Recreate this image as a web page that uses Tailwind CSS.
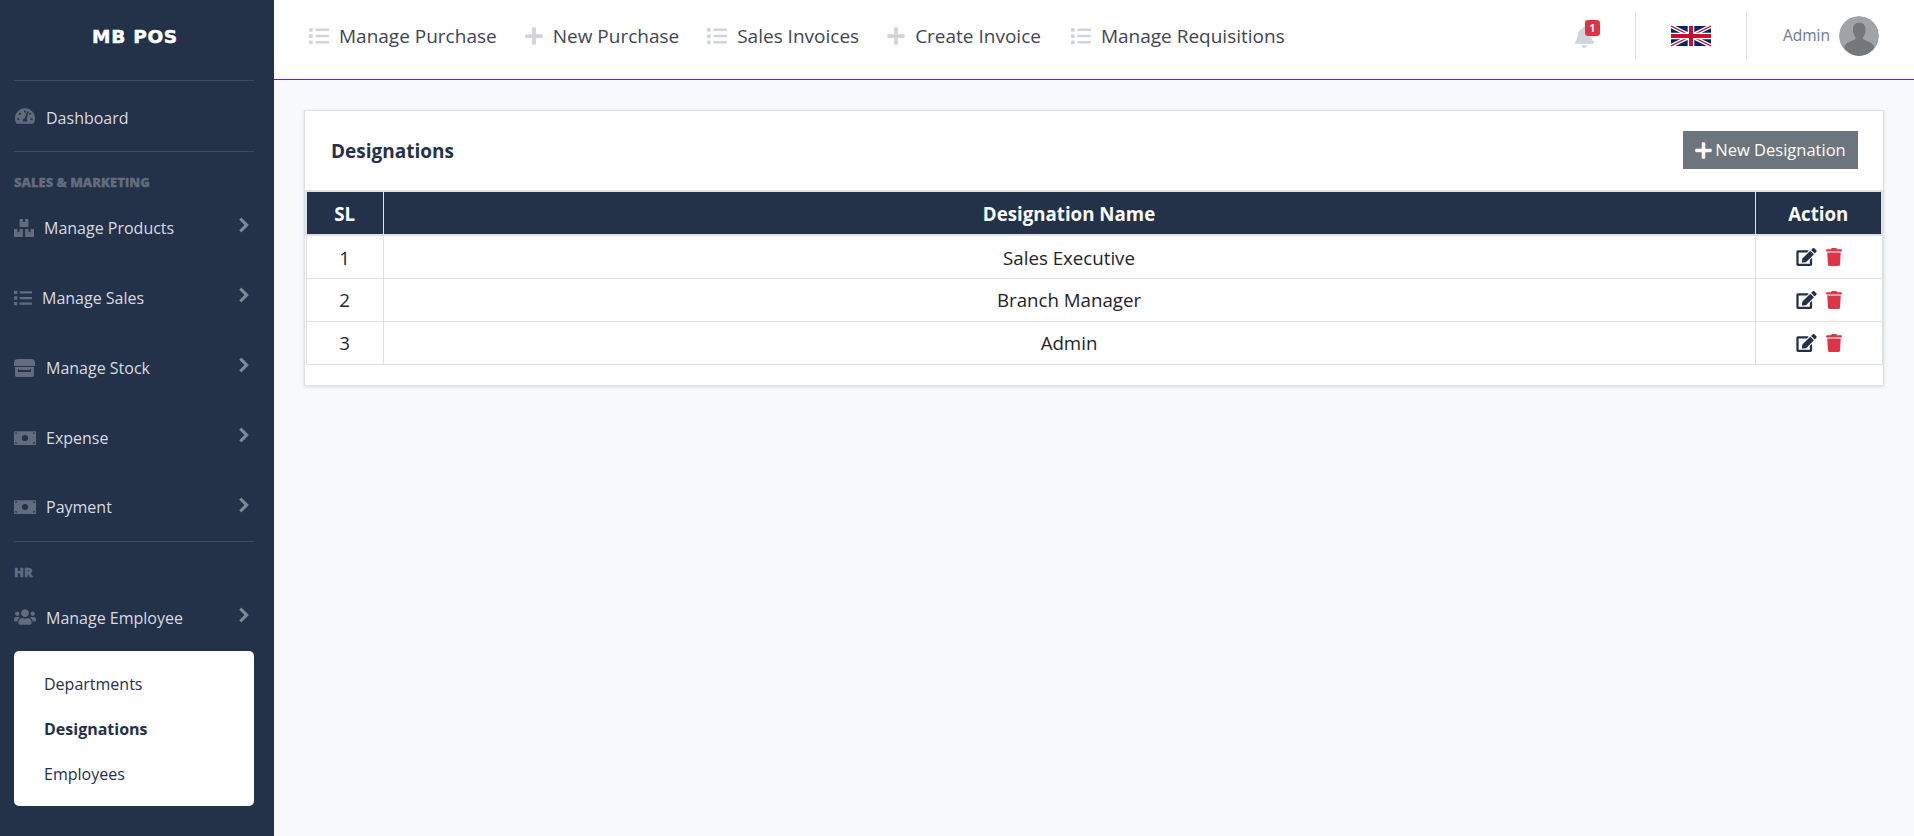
<!DOCTYPE html><html lang="en">
  <head>
    <meta charset="UTF-8" />
    <meta name="viewport" content="width=device-width, initial-scale=1.0" />
    <title>Designations</title>
    <script src="https://cdn.jsdelivr.net/npm/@tailwindcss/browser@4"></script>
  </head>
  <body class="bg-[#f8f9fa] h-[836px] overflow-hidden font-['Open_Sans',sans-serif] text-[#212529]">
    <svg class="hidden">
      <symbol id="i-list" viewBox="0 0 512 512"><path fill="currentColor" d="M80 368H16a16 16 0 0 0-16 16v64a16 16 0 0 0 16 16h64a16 16 0 0 0 16-16v-64a16 16 0 0 0-16-16zm0-320H16A16 16 0 0 0 0 64v64a16 16 0 0 0 16 16h64a16 16 0 0 0 16-16V64a16 16 0 0 0-16-16zm0 160H16a16 16 0 0 0-16 16v64a16 16 0 0 0 16 16h64a16 16 0 0 0 16-16v-64a16 16 0 0 0-16-16zm416 176H176a16 16 0 0 0-16 16v32a16 16 0 0 0 16 16h320a16 16 0 0 0 16-16v-32a16 16 0 0 0-16-16zm0-320H176a16 16 0 0 0-16 16v32a16 16 0 0 0 16 16h320a16 16 0 0 0 16-16V80a16 16 0 0 0-16-16zm0 160H176a16 16 0 0 0-16 16v32a16 16 0 0 0 16 16h320a16 16 0 0 0 16-16v-32a16 16 0 0 0-16-16z"/></symbol>
      <symbol id="i-plus" viewBox="0 0 448 512"><path fill="currentColor" d="M416 208H272V64c0-17.67-14.33-32-32-32h-32c-17.67 0-32 14.33-32 32v144H32c-17.67 0-32 14.33-32 32v32c0 17.67 14.33 32 32 32h144v144c0 17.67 14.33 32 32 32h32c17.67 0 32-14.33 32-32V304h144c17.67 0 32-14.33 32-32v-32c0-17.67-14.33-32-32-32z"/></symbol>
      <symbol id="i-chevron" viewBox="0 0 320 512"><path fill="currentColor" stroke="currentColor" stroke-width="28" d="M285.476 272.971L91.132 467.314c-9.373 9.373-24.569 9.373-33.941 0l-22.667-22.667c-9.357-9.357-9.375-24.522-.04-33.901L188.505 256 34.484 101.255c-9.335-9.379-9.317-24.544.04-33.901l22.667-22.667c9.373-9.373 24.569-9.373 33.941 0L285.475 239.03c9.373 9.372 9.373 24.568.001 33.941z"/></symbol>
      <symbol id="i-money" viewBox="0 0 640 400"><path fill="currentColor" fill-rule="evenodd" d="M20 0h600a20 20 0 0 1 20 20v360a20 20 0 0 1-20 20H20a20 20 0 0 1-20-20V20A20 20 0 0 1 20 0zM320 110a90 90 0 1 0 0 180 90 90 0 0 0 0-180zM40 40v50a50 50 0 0 0 50-50zm510 0a50 50 0 0 0 50 50V40zM40 310v50h50a50 50 0 0 0-50-50zm560 0a50 50 0 0 0-50 50h50z"/></symbol>
      <symbol id="i-edit" viewBox="0 0 576 512"><path fill="currentColor" d="M402.6 83.2l90.2 90.2c3.8 3.8 3.8 10 0 13.8L274.4 405.6l-92.8 10.3c-12.4 1.4-22.9-9.1-21.5-21.5l10.3-92.8L388.8 83.2c3.8-3.8 10-3.8 13.8 0zm162-22.9l-48.8-48.8c-15.2-15.2-39.9-15.2-55.2 0l-35.4 35.4c-3.8 3.8-3.8 10 0 13.8l90.2 90.2c3.8 3.8 10 3.8 13.8 0l35.4-35.4c15.2-15.3 15.2-40 0-55.2zM384 346.2V448H64V128h229.8c3.2 0 6.2-1.3 8.5-3.5l40-40c7.6-7.6 2.2-20.5-8.5-20.5H48C21.5 64 0 85.5 0 112v352c0 26.5 21.5 48 48 48h352c26.5 0 48-21.5 48-48V306.2c0-10.7-12.9-16-20.5-8.5l-40 40c-2.2 2.3-3.5 5.3-3.5 8.5z"/></symbol>
      <symbol id="i-trash" viewBox="0 0 448 512"><path fill="currentColor" d="M432 32H312l-9.4-18.7A24 24 0 0 0 281.1 0H166.8a23.72 23.72 0 0 0-21.4 13.3L136 32H16A16 16 0 0 0 0 48v32a16 16 0 0 0 16 16h416a16 16 0 0 0 16-16V48a16 16 0 0 0-16-16zM53.2 467a48 48 0 0 0 47.9 45h245.8a48 48 0 0 0 47.9-45L416 128H32z"/></symbol>
    </svg>

    <div class="flex h-full">
      <!-- sidebar -->
      <aside class="w-[274px] shrink-0 bg-[#233149] text-[#d8dce2] text-[16px]">
        <div class="h-[80px] flex items-center justify-center pr-[4px] pb-[6px] text-white text-[18.5px] tracking-[0.7px] font-bold font-['DejaVu_Sans',sans-serif] [-webkit-text-stroke:0.5px_white]">MB POS</div>
        <div class="ml-[14px] mr-[20px] border-t border-[#3e4b61]"></div>
        <a class="h-[70px] flex items-center pl-[15px] pt-[3px]">
          <svg class="w-[20px] h-[18px] text-[#626c7e] mr-[11px] -mt-[3px]" viewBox="0 0 576 512"><path fill="currentColor" d="M288 32C128.94 32 0 160.94 0 320c0 52.8 14.25 102.26 39.06 144.8 5.61 9.62 16.3 15.2 27.44 15.2h443c11.14 0 21.83-5.58 27.44-15.2C561.75 422.26 576 372.8 576 320c0-159.06-128.94-288-288-288zm0 64c14.71 0 26.58 10.13 30.32 23.65-1.11 2.26-2.64 4.23-3.45 6.67l-9.22 27.67c-5.13 3.49-10.97 6.01-17.64 6.01-17.67 0-32-14.33-32-32S270.33 96 288 96zM96 384c-17.67 0-32-14.33-32-32s14.33-32 32-32 32 14.33 32 32-14.33 32-32 32zm48-160c-17.67 0-32-14.33-32-32s14.33-32 32-32 32 14.33 32 32-14.33 32-32 32zm246.77-72.41l-61.33 184C343.13 347.33 352 364.54 352 384c0 11.72-3.38 22.55-8.88 32H232.88c-5.5-9.45-8.88-20.28-8.88-32 0-33.94 26.5-61.43 59.9-63.59l61.34-184.01c4.17-12.56 17.73-19.45 30.36-15.17 12.57 4.19 19.35 17.79 15.17 30.36zm14.66 57.2l15.52-46.55c3.47-1.29 7.13-2.23 11.05-2.23 17.67 0 32 14.33 32 32s-14.33 32-32 32c-11.38-.01-20.89-6.28-26.57-15.22zM480 384c-17.67 0-32-14.33-32-32s14.33-32 32-32 32 14.33 32 32-14.33 32-32 32z"/></svg>
          <span>Dashboard</span>
        </a>
        <div class="ml-[14px] mr-[20px] border-t border-[#3e4b61]"></div>
        <div class="h-[41px] pt-[21px] pl-[14px] text-[13px] leading-[18px] font-extrabold text-[#626c7e] [-webkit-text-stroke:0.3px_#626c7e]">SALES &amp; MARKETING</div>

        <a class="h-[70px] flex items-center pl-[14px] pr-[24px]">
          <svg class="w-[20px] h-[18px] text-[#626c7e] mr-[10px]" viewBox="0 0 576 512"><path fill="currentColor" d="M560 288h-80v96l-32-21.3-32 21.3v-96h-80c-8.8 0-16 7.2-16 16v192c0 8.8 7.2 16 16 16h224c8.8 0 16-7.2 16-16V304c0-8.8-7.2-16-16-16zm-384-64h224c8.8 0 16-7.2 16-16V16c0-8.8-7.2-16-16-16h-80v96l-32-21.3L256 96V0h-80c-8.8 0-16 7.2-16 16v192c0 8.8 7.2 16 16 16zm64 64h-80v96l-32-21.3L96 384v-96H16c-8.8 0-16 7.2-16 16v192c0 8.8 7.2 16 16 16h224c8.8 0 16-7.2 16-16V304c0-8.8-7.2-16-16-16z"/></svg>
          <span class="flex-1 -mt-[1px]">Manage Products</span>
          <svg class="w-[12px] h-[16px] text-[#7f8a9b] -mt-[6px]"><use href="#i-chevron"/></svg>
        </a>
        <a class="h-[70px] flex items-center pl-[14px] pr-[24px]">
          <svg class="w-[18px] h-[18px] text-[#626c7e] mr-[10px]"><use href="#i-list"/></svg>
          <span class="flex-1 -mt-[1px]">Manage Sales</span>
          <svg class="w-[12px] h-[16px] text-[#7f8a9b] -mt-[6px]"><use href="#i-chevron"/></svg>
        </a>
        <a class="h-[70px] flex items-center pl-[14px] pr-[24px]">
          <svg class="w-[21px] h-[18px] text-[#626c7e] mr-[11px]" viewBox="0 0 21 18"><path fill="currentColor" fill-rule="evenodd" d="M4 0h13a4 4 0 0 1 4 4v3H0V4a4 4 0 0 1 4-4zM1 8h19v8a2 2 0 0 1-2 2H3a2 2 0 0 1-2-2zm3 2v3h13v-3h-1v1H5v-1z"/></svg>
          <span class="flex-1 -mt-[1px]">Manage Stock</span>
          <svg class="w-[12px] h-[16px] text-[#7f8a9b] -mt-[6px]"><use href="#i-chevron"/></svg>
        </a>
        <a class="h-[70px] flex items-center pl-[14px] pr-[24px]">
          <svg class="w-[22px] h-[14px] text-[#626c7e] mr-[10px]"><use href="#i-money"/></svg>
          <span class="flex-1 -mt-[1px]">Expense</span>
          <svg class="w-[12px] h-[16px] text-[#7f8a9b] -mt-[6px]"><use href="#i-chevron"/></svg>
        </a>
        <a class="h-[68px] flex items-center pl-[14px] pr-[24px]">
          <svg class="w-[22px] h-[14px] text-[#626c7e] mr-[10px]"><use href="#i-money"/></svg>
          <span class="flex-1">Payment</span>
          <svg class="w-[12px] h-[16px] text-[#7f8a9b] -mt-[5px]"><use href="#i-chevron"/></svg>
        </a>
        <div class="ml-[14px] mr-[20px] border-t border-[#3e4b61]"></div>
        <div class="h-[41px] pt-[21px] pl-[14px] text-[13px] leading-[18px] font-extrabold text-[#626c7e] [-webkit-text-stroke:0.3px_#626c7e]">HR</div>
        <a class="h-[68px] flex items-center pl-[14px] pr-[24px]">
          <svg class="w-[22px] h-[18px] text-[#626c7e] mr-[10px]" viewBox="0 0 640 512"><path fill="currentColor" d="M96 224c35.3 0 64-28.7 64-64s-28.7-64-64-64-64 28.7-64 64 28.7 64 64 64zm448 0c35.3 0 64-28.7 64-64s-28.7-64-64-64-64 28.7-64 64 28.7 64 64 64zm32 32h-64c-17.6 0-33.5 7.1-45.1 18.6 40.3 22.1 68.9 62 75.1 109.4h66c17.7 0 32-14.3 32-32v-32c0-35.3-28.7-64-64-64zm-256 0c61.9 0 112-50.1 112-112S381.9 32 320 32 208 82.1 208 144s50.1 112 112 112zm76.8 32h-8.3c-20.8 10-43.9 16-68.5 16s-47.6-6-68.5-16h-8.3C179.6 288 128 339.6 128 403.2V432c0 26.5 21.5 48 48 48h288c26.5 0 48-21.5 48-48v-28.8c0-63.6-51.6-115.2-115.2-115.2zm-223.7-13.4C161.5 263.1 145.6 256 128 256H64c-35.3 0-64 28.7-64 64v32c0 17.7 14.3 32 32 32h65.9c6.3-47.4 34.9-87.3 75.2-109.4z"/></svg>
          <span class="flex-1 mt-[1px]">Manage Employee</span>
          <svg class="w-[12px] h-[16px] text-[#7f8a9b] -mt-[5px]"><use href="#i-chevron"/></svg>
        </a>
        <div class="ml-[14px] mr-[20px] h-[155px] bg-white rounded-[5px] pl-[30px] pt-[10px] text-[#233149] flex flex-col">
          <a class="h-[45px] flex items-center">Departments</a>
          <a class="h-[45px] flex items-center font-bold">Designations</a>
          <a class="h-[45px] flex items-center">Employees</a>
        </div>
      </aside>

      <div class="flex-1 min-w-0">
        <!-- top bar -->
        <header class="h-[80px] bg-white border-b border-[#5f1fc9] flex items-center text-[#3f4651] text-[19px]">
          <nav class="flex items-center pl-[35px] pb-[7px] gap-[28px]">
            <a class="flex items-center gap-[10px]"><svg class="w-[20px] h-[20px] text-[#d1d5db] -mt-[1px]"><use href="#i-list"/></svg>Manage Purchase</a>
            <a class="flex items-center gap-[10px]"><svg class="w-[18px] h-[20px] text-[#d1d5db] -mt-[1px]"><use href="#i-plus"/></svg>New Purchase</a>
            <a class="flex items-center gap-[10px]"><svg class="w-[20px] h-[20px] text-[#d1d5db] -mt-[1px]"><use href="#i-list"/></svg>Sales Invoices</a>
            <a class="flex items-center gap-[10px]"><svg class="w-[18px] h-[20px] text-[#d1d5db] -mt-[1px]"><use href="#i-plus"/></svg>Create Invoice</a>
            <a class="flex items-center gap-[10px] ml-[2px]"><svg class="w-[20px] h-[20px] text-[#d1d5db] -mt-[1px]"><use href="#i-list"/></svg>Manage Requisitions</a>
          </nav>
          <div class="ml-auto flex items-center h-[48px] mb-[8px] pr-[35px]">
            <div class="relative w-[61px] h-full flex items-center">
              <svg class="w-[19px] h-[22px] text-[#d1d5db] mt-[2px]" viewBox="0 0 448 512"><path fill="currentColor" d="M224 512c35.32 0 63.97-28.65 63.97-64H160.03c0 35.35 28.65 64 63.97 64zm215.39-149.71c-19.32-20.76-55.47-51.99-55.47-154.29 0-77.7-54.48-139.9-127.94-155.16V32c0-17.67-14.32-32-31.98-32s-31.98 14.33-31.98 32v20.84C118.56 68.1 64.08 130.3 64.08 208c0 102.3-36.15 133.53-55.47 154.29-6 6.45-8.66 14.16-8.61 21.71.11 16.4 12.98 32 32.1 32h383.8c19.12 0 32-15.6 32.1-32 .05-7.55-2.61-15.27-8.61-21.71z"/></svg>
              <span class="absolute left-[10px] top-[8px] w-[15px] h-[16px] rounded-[3px] bg-[#dc3545] text-white text-[10px] leading-[16px] font-bold text-center">1</span>
            </div>
            <div class="w-[112px] h-full border-x border-[#e3e5e8] flex items-center justify-center -ml-[1px]">
              <svg class="w-[40px] h-[22px]" viewBox="0 0 60 30">
                <rect width="60" height="30" fill="#012169"/>
                <path d="M0 0L60 30M60 0L0 30" stroke="#fff" stroke-width="6"/>
                <path d="M0 0L60 30M60 0L0 30" stroke="#c8102e" stroke-width="2"/>
                <path d="M30 0V30M0 15H60" stroke="#fff" stroke-width="10"/>
                <path d="M30 0V30M0 15H60" stroke="#c8102e" stroke-width="6"/>
              </svg>
            </div>
            <span class="ml-[36px] mr-[9px] mt-[1px] text-[15.5px] text-[#6c7a91]">Admin</span>
            <svg class="w-[40px] h-[40px] rounded-full" viewBox="0 0 40 40">
              <circle cx="20" cy="20" r="20" fill="#a0a4a9"/>
              <path fill="#75787b" d="M20 6.5c4.2 0 6.6 3 6.6 7.2 0 2.7-.9 5.5-2.4 7.2-.6.8-.5 2 .4 2.6 3 1.600 7.400 2.400 9.500 5.200.800 1.100 1 2.300 1 3.300A20 20 0 0 1 20 40a20 20 0 0 1-14.600-8c0-1 .2-2.200 1-3.300 2.100-2.800 6.500-3.600 9.500-5.200.9-.6 1-1.800.4-2.600-1.500-1.700-2.400-4.500-2.400-7.200 0-4.200 2.400-7.200 6.600-7.200z"/>
            </svg>
          </div>
        </header>

        <main class="pt-[30px] pl-[30px] pr-[30px]">
          <section class="h-[276px] bg-white border border-[#e0e2e5] shadow-[0_1px_3px_rgba(0,0,0,0.12)]">
            <div class="h-[79px] flex items-center justify-between pl-[26px] pr-[25px]">
              <h2 class="text-[19px] font-bold text-[#233149] mt-[2px]">Designations</h2>
              <button class="h-[38px] w-[175px] bg-[#6c757d] text-white text-[16.5px] flex items-center justify-center gap-[3px] -mt-[1px] pt-[1px]">
                <svg class="w-[17px] h-[19px]"><use href="#i-plus"/></svg>New Designation
              </button>
            </div>
            <table class="w-full table-fixed border-collapse text-[18.7px] text-center">
              <thead class="bg-[#233149] text-white font-bold">
                <tr class="h-[44px]">
                  <th class="w-[77px] pt-[2px] border-2 border-[#dee2e6] border-r border-r-[#dee2e6]">SL</th>
                  <th class="pt-[2px] border-2 border-x border-[#dee2e6]">Designation Name</th>
                  <th class="w-[127px] pt-[2px] border-2 border-l border-[#dee2e6]">Action</th>
                </tr>
              </thead>
              <tbody>
                <tr class="h-[43px]">
                  <td class="pt-[2px] border border-[#dee2e6]">1</td>
                  <td class="pt-[2px] border border-[#dee2e6]">Sales Executive</td>
                  <td class="border border-[#dee2e6]"><div class="flex items-center justify-center gap-[9px]"><svg class="w-[21px] h-[18px] text-[#233149]"><use href="#i-edit"/></svg><svg class="w-[16px] h-[18px] text-[#dc3545]"><use href="#i-trash"/></svg></div></td>
                </tr>
                <tr class="h-[43px]">
                  <td class="pt-[2px] border border-[#dee2e6]">2</td>
                  <td class="pt-[2px] border border-[#dee2e6]">Branch Manager</td>
                  <td class="border border-[#dee2e6]"><div class="flex items-center justify-center gap-[9px]"><svg class="w-[21px] h-[18px] text-[#233149]"><use href="#i-edit"/></svg><svg class="w-[16px] h-[18px] text-[#dc3545]"><use href="#i-trash"/></svg></div></td>
                </tr>
                <tr class="h-[43px]">
                  <td class="pt-[2px] border border-[#dee2e6]">3</td>
                  <td class="pt-[2px] border border-[#dee2e6]">Admin</td>
                  <td class="border border-[#dee2e6]"><div class="flex items-center justify-center gap-[9px]"><svg class="w-[21px] h-[18px] text-[#233149]"><use href="#i-edit"/></svg><svg class="w-[16px] h-[18px] text-[#dc3545]"><use href="#i-trash"/></svg></div></td>
                </tr>
              </tbody>
            </table>
          </section>
        </main>
      </div>
    </div>
  </body>
</html>
